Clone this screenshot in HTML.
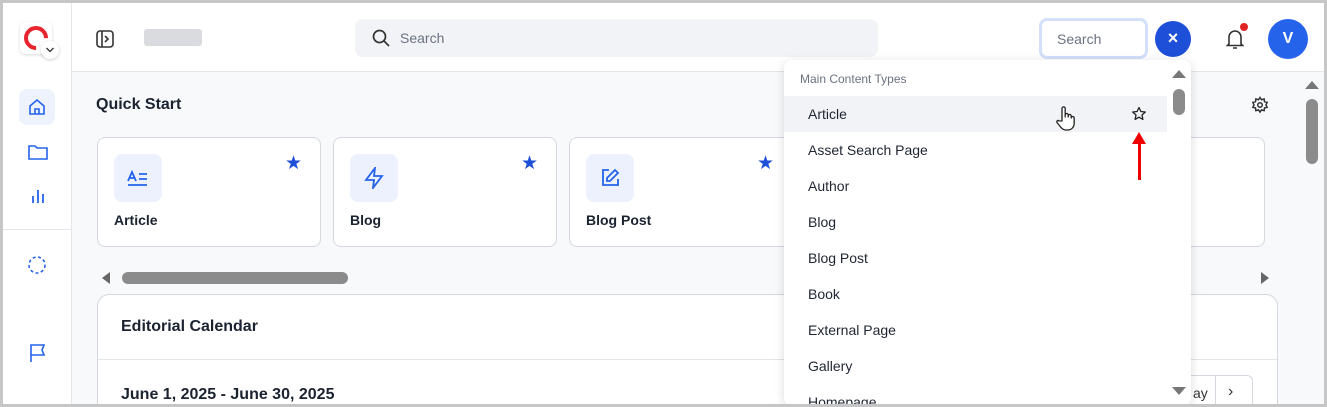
<!DOCTYPE html><html><head><style>
*{box-sizing:border-box;margin:0;padding:0}
body{width:1327px;height:407px;overflow:hidden;font-family:"Liberation Sans",sans-serif;background:#c6c6c6;position:relative}
.frame{position:absolute;left:3px;top:3px;width:1321px;height:401px;background:#f8f9fb;overflow:hidden}
.abs{position:absolute}
.hdr{left:0;top:0;width:1321px;height:69px;background:#fff;border-bottom:1px solid #e3e6ea}
.side{left:0;top:0;width:69px;height:401px;background:#fff;border-right:1px solid #e3e6ea}
.card{background:#fff;border:1px solid #d4d8de;border-radius:8px}
.ib{width:48px;height:48px;border-radius:8px;background:#ecf1fd;display:flex;align-items:center;justify-content:center}
.ct{font-weight:bold;font-size:14px;color:#1b2230}
.dd{left:781px;top:57px;width:407px;height:346px;background:#fff;border-radius:8px;box-shadow:0 2px 10px rgba(0,0,0,.15)}
.it{position:absolute;left:24px;font-size:14px;color:#1f2533}
</style></head><body><div class="frame">
<div class="abs hdr"></div>
<div class="abs side"></div>
<div class="abs" style="left:0;top:226px;width:69px;height:1px;background:#e3e6ea"></div>
<!-- logo -->
<div class="abs" style="left:17px;top:19px;width:32px;height:32px;background:#fff;border-radius:6px;box-shadow:0 1px 3px rgba(0,0,0,.15)"></div>
<div class="abs" style="left:21px;top:23px;width:24px;height:24px;border:4px solid #e8242f;border-radius:50%;border-right-color:transparent;transform:rotate(45deg)"></div>
<div class="abs" style="left:38px;top:38px;width:18px;height:18px;background:#fff;border-radius:50%;box-shadow:0 1px 3px rgba(0,0,0,.2)"></div>
<svg class="abs" style="left:42px;top:43px" width="10" height="8" viewBox="0 0 10 8" fill="none" stroke="#333" stroke-width="1.3"><path d="M1.5 2l3.5 3.5 3.5-3.5"/></svg>
<svg class="abs" style="left:93px;top:27px" width="18" height="18" viewBox="0 0 18 18" fill="none" stroke="#333" stroke-width="1.6"><rect x="1" y="1" width="16" height="16" rx="3"/><path d="M6 1v16M9 6l3 3-3 3"/></svg>
<div class="abs" style="left:141px;top:26px;width:58px;height:17px;background:#d9dbdf;border-radius:3px"></div>
<div class="abs" style="left:352px;top:16px;width:523px;height:38px;background:#f2f3f6;border-radius:8px"></div>
<svg class="abs" style="left:369px;top:26px" width="18" height="18" viewBox="0 0 18 18" fill="none" stroke="#333" stroke-width="1.7"><circle cx="7.5" cy="7.5" r="6"/><path d="M12 12l5 5"/></svg>
<div class="abs" style="left:397px;top:27px;font-size:14px;color:#6b7280">Search</div>
<div class="abs" style="left:1036px;top:15px;width:109px;height:41px;border:3px solid #d3e0fb;border-radius:8px;background:#fff;font-size:14px;color:#6b7280;padding:10px 0 0 15px">Search</div>
<div class="abs" style="left:1152px;top:18px;width:36px;height:36px;border-radius:50%;background:#1d4fd8;color:#fff;font-weight:bold;font-size:18px;text-align:center;line-height:35px">×</div>
<svg class="abs" style="left:1222px;top:25px" width="20" height="22" viewBox="0 0 20 22" fill="none" stroke="#333" stroke-width="1.6"><path d="M4 16V9a6 6 0 0 1 12 0v7l1.5 1.5h-15zM8 20h4"/></svg>
<div class="abs" style="left:1237px;top:20px;width:8px;height:8px;background:#e02424;border-radius:50%"></div>
<div class="abs" style="left:1265px;top:16px;width:40px;height:40px;border-radius:50%;background:#2563eb;color:#fff;font-weight:bold;font-size:16px;text-align:center;line-height:40px">V</div>
<!-- sidebar icons -->
<div class="abs" style="left:16px;top:86px;width:36px;height:36px;border-radius:8px;background:#edf2fd"></div>
<svg class="abs" style="left:25px;top:95px" width="18" height="18" viewBox="0 0 18 18" fill="none" stroke="#2563eb" stroke-width="1.6"><path d="M2 8l7-6 7 6v8H2zM7 16v-5h4v5"/></svg>
<svg class="abs" style="left:25px;top:140px" width="20" height="18" viewBox="0 0 20 18" fill="none" stroke="#2563eb" stroke-width="1.6"><path d="M1 3h6l2 2h10v11H1z"/></svg>
<svg class="abs" style="left:27px;top:185px" width="16" height="16" viewBox="0 0 16 16" stroke="#2563eb" stroke-width="1.8"><path d="M3 8v7M8 2v13M13 6v9"/></svg>
<svg class="abs" style="left:24px;top:252px" width="20" height="20" viewBox="0 0 20 20" fill="none" stroke="#2563eb" stroke-width="1.6" stroke-dasharray="3 2.5"><circle cx="10" cy="10" r="8"/></svg>
<svg class="abs" style="left:26px;top:340px" width="18" height="20" viewBox="0 0 18 20" fill="none" stroke="#2563eb" stroke-width="1.6"><path d="M2 19V2h13l-2 5 2 5H2"/></svg>
<div class="abs" style="left:93px;top:93px;font-weight:bold;font-size:16px;color:#1b2230">Quick Start</div>
<svg class="abs" style="left:1248px;top:93px" width="18" height="18" viewBox="0 0 24 24" fill="none" stroke="#333" stroke-width="2"><circle cx="12" cy="12" r="3"/><path d="M12 2l2 3 3.5-1 .5 3.5 3.5 1-1.5 3.5 1.5 3-3.5 1-.5 3.5-3.5-1-2 3-2-3-3.5 1-.5-3.5-3.5-1L4 12 2.5 8.5 6 7.5 6.5 4 10 5z"/></svg>
<!-- cards -->
<div class="abs card" style="left:94px;top:134px;width:224px;height:110px"></div>
<div class="abs card" style="left:330px;top:134px;width:224px;height:110px"></div>
<div class="abs card" style="left:566px;top:134px;width:224px;height:110px"></div>
<div class="abs card" style="left:1100px;top:134px;width:162px;height:110px"></div>
<div class="abs ib" style="left:111px;top:151px"><svg width="22" height="16" viewBox="0 0 22 16" fill="none" stroke="#2563eb" stroke-width="1.8"><path d="M1 11l4-9 4 9M2.5 8h5M12 4h8M12 9h8M1 15h19"/></svg></div>
<div class="abs ib" style="left:347px;top:151px"><svg width="20" height="22" viewBox="0 0 20 22" fill="none" stroke="#2563eb" stroke-width="1.8"><path d="M11 1L2 13h8l-1 8 9-12h-8z"/></svg></div>
<div class="abs ib" style="left:583px;top:151px"><svg width="20" height="20" viewBox="0 0 20 20" fill="none" stroke="#2563eb" stroke-width="1.8"><path d="M9 2H3v15h15v-6M15 2l3 3-8 8H7v-3z"/></svg></div>
<div class="abs ct" style="left:111px;top:209px">Article</div>
<div class="abs ct" style="left:347px;top:209px">Blog</div>
<div class="abs ct" style="left:583px;top:209px">Blog Post</div>
<div class="abs" style="left:282px;top:149px;color:#1d4fd8;font-size:19px">★</div>
<div class="abs" style="left:518px;top:149px;color:#1d4fd8;font-size:19px">★</div>
<div class="abs" style="left:754px;top:149px;color:#1d4fd8;font-size:19px">★</div>
<!-- h scroll -->
<div class="abs" style="left:99px;top:269px;width:0;height:0;border-top:6px solid transparent;border-bottom:6px solid transparent;border-right:8px solid #666"></div>
<div class="abs" style="left:119px;top:269px;width:226px;height:12px;border-radius:6px;background:#8b8b8b"></div>
<div class="abs" style="left:1258px;top:269px;width:0;height:0;border-top:6px solid transparent;border-bottom:6px solid transparent;border-left:8px solid #666"></div>
<!-- calendar -->
<div class="abs card" style="left:94px;top:291px;width:1181px;height:130px;border-radius:12px"></div>
<div class="abs" style="left:95px;top:356px;width:1179px;height:1px;background:#e3e6ea"></div>
<div class="abs" style="left:118px;top:315px;font-weight:bold;font-size:16px;color:#1b2230">Editorial Calendar</div>
<div class="abs" style="left:118px;top:383px;font-weight:bold;font-size:16px;color:#1b2230">June 1, 2025 - June 30, 2025</div>
<div class="abs" style="left:1150px;top:372px;width:100px;height:40px;border:1px solid #d4d8de;border-radius:6px;background:#fff"></div>
<div class="abs" style="left:1212px;top:372px;width:1px;height:40px;background:#d4d8de"></div>
<div class="abs" style="left:1190px;top:382px;font-size:14px;color:#333">ay</div>
<div class="abs" style="left:1225px;top:380px;font-size:16px;color:#333">›</div>
<!-- page v scrollbar -->
<div class="abs" style="left:1302px;top:78px;width:0;height:0;border-left:7px solid transparent;border-right:7px solid transparent;border-bottom:8px solid #777"></div>
<div class="abs" style="left:1303px;top:96px;width:12px;height:65px;border-radius:6px;background:#8b8b8b"></div>
<!-- dropdown -->
<div class="abs dd">
<div class="abs" style="left:16px;top:12px;font-size:12px;color:#6b7280">Main Content Types</div>
<div class="abs" style="left:0;top:36px;width:383px;height:36px;background:#f2f3f6"></div>
<div class="it" style="top:46px">Article</div>
<div class="it" style="top:82px">Asset Search Page</div>
<div class="it" style="top:118px">Author</div>
<div class="it" style="top:154px">Blog</div>
<div class="it" style="top:190px">Blog Post</div>
<div class="it" style="top:226px">Book</div>
<div class="it" style="top:262px">External Page</div>
<div class="it" style="top:298px">Gallery</div>
<div class="it" style="top:334px">Homepage</div>
<svg class="abs" style="left:347px;top:46px" width="16" height="16" viewBox="0 0 16 16" fill="none" stroke="#222" stroke-width="1.3" stroke-linejoin="round"><path d="M8 1.5l1.9 4 4.4.5-3.3 3 .9 4.4L8 11.2l-3.9 2.2.9-4.4-3.3-3 4.4-.5z"/></svg>
<svg class="abs" style="left:270px;top:45px" width="24" height="28" viewBox="0 0 24 28" fill="#fff" stroke="#222" stroke-width="1.3" stroke-linejoin="round"><path d="M8 16V3.5a1.6 1.6 0 0 1 3.2 0V12v-2a1.5 1.5 0 0 1 3 0v2-1a1.5 1.5 0 0 1 3 0v2a1.5 1.5 0 0 1 3 0v5c0 4-2.5 7-6.5 7h-2c-2.5 0-4-1.5-5.5-3.5L3 17.5c-.8-1.2.8-2.7 2-1.6z"/></svg>
<div class="abs" style="left:354px;top:76px;width:3px;height:44px;background:#e00"></div>
<div class="abs" style="left:348px;top:72px;width:0;height:0;border-left:7px solid transparent;border-right:7px solid transparent;border-bottom:12px solid #e00"></div>
<div class="abs" style="left:388px;top:10px;width:0;height:0;border-left:7px solid transparent;border-right:7px solid transparent;border-bottom:8px solid #777"></div>
<div class="abs" style="left:389px;top:29px;width:12px;height:26px;border-radius:6px;background:#8b8b8b"></div>
<div class="abs" style="left:388px;top:327px;width:0;height:0;border-left:7px solid transparent;border-right:7px solid transparent;border-top:8px solid #777"></div>
</div>
</div></body></html>
